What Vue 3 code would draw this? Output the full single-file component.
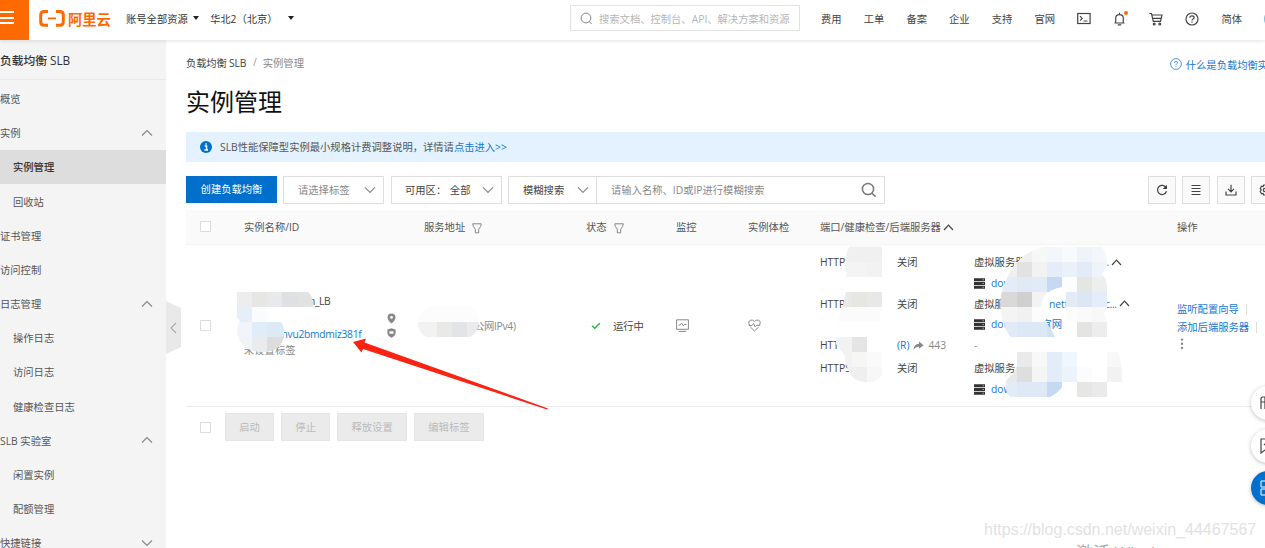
<script setup>
import { ref } from "vue";

const navLinks = ["费用", "工单", "备案", "企业", "支持", "官网"];

const menu = ref([
  { label: "概览" },
  { label: "实例", arrow: "up" },
  { label: "实例管理", child: true, active: true },
  { label: "回收站", child: true },
  { label: "证书管理" },
  { label: "访问控制" },
  { label: "日志管理", arrow: "up" },
  { label: "操作日志", child: true },
  { label: "访问日志", child: true },
  { label: "健康检查日志", child: true },
  { label: "SLB 实验室", arrow: "up" },
  { label: "闲置实例", child: true },
  { label: "配额管理", child: true },
  { label: "快捷链接", arrow: "down" },
]);

const listeners = [
  { id: 1, port: "HTTPS", check: "关闭", group: "虚拟服务器", tail: ".", tailClass: "tail-a", arrow: true, server: "dow" },
  { id: 2, port: "HTTPS", check: "关闭", group: "虚拟服", mid: "nett", tail: "c...", tailClass: "tail-b", arrow: true, server: "dow", serverTail: "官网" },
  { id: 3, port: "HTTP", redirect: "443" },
  { id: 4, port: "HTTPS", check: "关闭", group: "虚拟服务", server: "dow" },
];

const batchActions = ["启动", "停止", "释放设置", "编辑标签"];

// redaction blocks: x, y, width, height, fill
const nameBlocks = [
  [237, 292, 15, 15, "#ededed"], [252, 292, 15, 15, "#e6e6e4"], [267, 292, 15, 15, "#e8e9eb"],
  [282, 292, 15, 15, "#dfe0e3"], [297, 292, 17, 15, "#e2e2e2"],
  [237, 307, 15, 15, "#e6eff9"], [252, 307, 15, 15, "#f9fbff"],
  [237, 322, 15, 15, "#f1f5fb"], [252, 322, 15, 15, "#e0ecf8"], [267, 322, 18, 15, "#dceaf5"],
  [237, 337, 15, 15, "#f2f3f7"], [252, 337, 15, 15, "#eaebed"], [267, 337, 17, 15, "#dddddd"],
];
const addressBlocks = [
  [417, 307, 62, 15, "#fcfcfc"], [417, 322, 20, 15, "#f2f2f2"], [437, 322, 15, 15, "#e9e9e7"],
  [452, 322, 15, 15, "#e2e4e6"], [467, 322, 12, 15, "#ebebeb"],
];
const portBlocks = [
  [846, 243, 36, 4, "#fafafa"], [846, 247, 36, 15, "#f0f0f0"], [846, 262, 21, 15, "#f4f4f4"], [867, 262, 15, 15, "#f2f2f2"],
  [842, 292, 10, 15, "#e8eaea"], [852, 292, 15, 15, "#e6e6e3"], [867, 292, 15, 15, "#e8e8e8"], [838, 307, 44, 15, "#fbfbfb"],
  [836, 337, 16, 15, "#f0f2f3"], [852, 337, 15, 15, "#e5e5e5"],
  [836, 352, 16, 15, "#f0f2f4"], [852, 352, 15, 15, "#f6f6f4"], [867, 352, 15, 15, "#fafafa"],
  [846, 367, 21, 15, "#efefef"], [867, 367, 15, 15, "#f7f7f7"],
];
const cellWidth = 15;
const groupRows = [
  [247, ["#f8f8f8", "#f0f0f0", "#f6f7f7", "#f3f7fb", "#f8fafd", "#eff4fa", "#f3f7fb"]],
  [262, ["#f0f0f0", "#e2e2e2", "#f2f2f2", "#e5eef8", "#eaf1f9", "#e2ebf7", "#eef4fa"]],
  [277, ["#e4edf7", "#dfeaf5", "#dfebf6", "#c5daf0", "#fcfdfe", "#e5e5e2", "#edefef"]],
  [292, ["#d9d9d9", "#d0d0d1", "#f3f3f3", "#ffffff", "#e2ebf6", "#dbe7f5", "#e4edf9"]],
  [307, ["#f4f4f4", "#f1f1f1", "#fcfcfc", "#ffffff", "#fcfcfc", "#fafafa", "#f8f8f8"]],
  [322, ["#e1ebf7", "#dce8f6", "#dce8f5", "#d2e2f3", "#ffffff", "#e4e4e2", "#ecedec"]],
  [352, ["#f3f3f3", "#eaeaea", "#f8f8f8", "#e2edf9", "#f0f6fd", "#ffffff", "#ffffff", "#f8f8f8"]],
  [367, ["#e8e8e8", "#dedede", "#f5f5f5", "#e3edf8", "#edf3fa", "#fcfcfc", "#ffffff", "#f2f2f2"]],
  [382, ["#e2ecf6", "#dfe9f6", "#dfe9f5", "#c5daf0", "#ffffff", "#e6e7e5", "#e9eae9"]],
];
const groupBlocks = groupRows.flatMap(([y, fills]) =>
  fills.map((fill, i) => [
    i === 0 ? 1000 : 1002 + i * cellWidth,
    y,
    i === 0 ? 17 : cellWidth,
    15,
    fill,
  ]),
);
const masks = [
  { id: "name", blocks: nameBlocks },
  { id: "address", blocks: addressBlocks },
  { id: "port", blocks: portBlocks },
  { id: "group", blocks: groupBlocks },
];
</script>

<template>
  <div class="console">
    <header class="topbar">
      <div class="menu-button"><i></i><i></i><i></i></div>
      <div class="brand">
        <svg width="26" height="17" viewBox="0 0 26 17">
          <path d="M9 1.6H5.2Q1.7 1.6 1.7 5V12Q1.7 15.2 5.2 15.2H9M17 1.6H20.8Q24.3 1.6 24.3 5V12Q24.3 15.2 20.8 15.2H17" fill="none" stroke="#ff6a00" stroke-width="3" />
          <path d="M9 8.4H17" stroke="#ff6a00" stroke-width="1.8" />
        </svg>
        <span>阿里云</span>
      </div>
      <div class="scope">账号全部资源<i class="caret"></i></div>
      <div class="scope region">华北2（北京）<i class="caret"></i></div>
      <div class="global-search">
        <svg width="13" height="13" viewBox="0 0 13 13"><circle cx="6" cy="6" r="4.9" /><path d="M9.3 9.5L11.5 12" /></svg>
        <span>搜索文档、控制台、API、解决方案和资源</span>
      </div>
      <nav class="top-links">
        <span v-for="link in navLinks" :key="link">{{ link }}</span>
        <svg width="14" height="14" viewBox="0 0 14 14"><rect x=".7" y="1.5" width="12.4" height="10" /><path d="M3 4.2L5.2 6.4L3 8.6M6.5 9H10.5" /></svg>
        <span class="bell">
          <svg width="13" height="14" viewBox="0 0 13 14"><path d="M1.5 11H11.5M2.7 11V6.4Q2.7 2.7 6.5 2.7T10.3 6.4V11M6.5 .8V2.7M4.8 12.9H8.2" /></svg>
          <i></i>
        </span>
        <svg width="14" height="14" viewBox="0 0 14 14"><path d="M.4 1.5H2.5L4.3 9.4H11.5L13 3H3M4 6.3H12" /><circle cx="5.2" cy="12" r=".9" /><circle cx="10.8" cy="12" r=".9" /></svg>
        <svg width="14" height="14" viewBox="0 0 14 14"><circle cx="7" cy="7" r="6" /><path d="M4.9 5.7Q4.9 3.8 7 3.8T9.1 5.6Q9.1 6.6 7.8 7.2Q7 7.6 7 8.5M7 9.4V10.7" /></svg>
        <span>简体</span>
        <i class="avatar"></i>
      </nav>
    </header>

    <div class="body">
      <aside class="sidebar">
        <h2>负载均衡 SLB</h2>
        <ul>
          <li v-for="item in menu" :key="item.label" :class="{ child: item.child, active: item.active }">
            <span>{{ item.label }}</span>
            <svg v-if="item.arrow" class="arrow" :class="item.arrow" width="12" height="8" viewBox="0 0 12 8"><path d="M1 6.5L6 1.5L11 6.5" /></svg>
          </li>
        </ul>
        <div class="collapse">
          <svg width="15" height="53" viewBox="0 0 15 53"><path d="M0 0L15 7V46L0 53Z" fill="#e9e9e9" /><path d="M10 22L5 27L10 32" fill="none" stroke="#aaa" stroke-width="1.2" /></svg>
        </div>
      </aside>

      <main class="main">
        <div class="crumbs">
          <span class="root">负载均衡 SLB</span><em>/</em><span class="current">实例管理</span>
          <a class="help">
            <svg width="12" height="12" viewBox="0 0 14 14"><circle cx="7" cy="7" r="6.3" /><path d="M5.2 5.7Q5.2 4 7 4T8.8 5.6Q8.8 6.4 7.7 7Q7 7.4 7 8.4M7 9.4V10.4" /></svg>
            什么是负载均衡实例
          </a>
        </div>
        <h1>实例管理</h1>

        <div class="notice">
          <svg width="12" height="12" viewBox="0 0 12 12"><circle cx="6" cy="6" r="6" fill="#0070cc" /><path d="M4.7 5H6.6V8.8M4.4 9H8M6 2.3V3.8" fill="none" stroke="#fff" stroke-width="1.4" /></svg>
          <span>SLB性能保障型实例最小规格计费调整说明，详情请<a>点击进入&gt;&gt;</a></span>
        </div>

        <div class="toolbar">
          <button class="primary">创建负载均衡</button>
          <div class="select tag"><span>请选择标签</span><svg class="arrow" width="12" height="8" viewBox="0 0 12 8"><path d="M1 1.3L6 6.5L11 1.3" /></svg></div>
          <div class="select zone"><span>可用区：&nbsp;全部</span><svg class="arrow" width="12" height="8" viewBox="0 0 12 8"><path d="M1 1.3L6 6.5L11 1.3" /></svg></div>
          <div class="select fuzzy"><span>模糊搜索</span><svg class="arrow" width="12" height="8" viewBox="0 0 12 8"><path d="M1 1.3L6 6.5L11 1.3" /></svg></div>
          <div class="query">
            <span>请输入名称、ID或IP进行模糊搜索</span>
            <svg width="16" height="16" viewBox="0 0 16 16"><circle cx="7" cy="7" r="5.6" /><path d="M11 11.2L14.6 14.6" /></svg>
          </div>
          <div class="tools">
            <button><svg width="12" height="12" viewBox="0 0 12 12"><path d="M10.2 3.8A4.6 4.6 0 1 0 10.5 7.3" /><path class="solid" d="M10.9 .8V4.9H6.8Z" /></svg></button>
            <button><svg width="12" height="12" viewBox="0 0 12 12"><path d="M1.5 1.5H10.5M1.5 4.5H10.5M1.5 7.5H10.5M1.5 10.5H10.5" /></svg></button>
            <button><svg width="12" height="12" viewBox="0 0 12 12"><path d="M1 7.5V11H11V7.5M6 .8V7.5M3 4.8L6 7.8L9 4.8" /></svg></button>
            <button><svg width="12" height="12" viewBox="0 0 12 12"><path d="M4.7 1H7.3L7.8 2.5L9.4 2.1L10.8 4.4L9.8 6L10.8 7.6L9.4 9.9L7.8 9.5L7.3 11H4.7L4.2 9.5L2.6 9.9L1.2 7.6L2.2 6L1.2 4.4L2.6 2.1L4.2 2.5Z" /><circle cx="6" cy="6" r="1.7" /></svg></button>
          </div>
        </div>

        <div class="table">
          <div class="row head">
            <div><i class="checkbox"></i></div>
            <div>实例名称/ID</div>
            <div>服务地址<svg class="filter" width="10" height="11" viewBox="0 0 10 11"><path d="M.7 .8H9.3Q9.2 3.8 6.7 6V9.8H3.3V6Q.8 3.8 .7 .8Z" /></svg></div>
            <div>状态<svg class="filter" width="10" height="11" viewBox="0 0 10 11"><path d="M.7 .8H9.3Q9.2 3.8 6.7 6V9.8H3.3V6Q.8 3.8 .7 .8Z" /></svg></div>
            <div>监控</div>
            <div>实例体检</div>
            <div>端口/健康检查/后端服务器<svg class="expand" width="11" height="7" viewBox="0 0 11 7"><path d="M1 6L5.5 1.2L10 6" /></svg></div>
            <div>操作</div>
          </div>
          <div class="row record">
            <div><i class="checkbox"></i></div>
            <div class="name-cell">
              <div class="names">
                <span class="name">n_LB</span>
                <a class="instance-id">hvu2bmdmiz381f</a>
                <span class="no-tag">未设置标签</span>
              </div>
              <div class="marks">
                <svg width="9" height="11" viewBox="0 0 9 11"><path fill-rule="evenodd" d="M4.5 .4A4 4 0 0 1 8.5 4.4Q8.5 7 4.5 10.5Q.5 7 .5 4.4A4 4 0 0 1 4.5 .4ZM4.5 3A1.4 1.4 0 1 0 4.5 5.8A1.4 1.4 0 0 0 4.5 3Z" /></svg>
                <svg width="9" height="10" viewBox="0 0 9 10"><path fill-rule="evenodd" d="M.4 1.4L4.5 .3L8.6 1.4V5Q8.4 8.2 4.5 9.7Q.6 8.2 .4 5ZM2.5 3.2V5.8H6.5V3.2Z" /></svg>
              </div>
            </div>
            <div><span class="address">公网IPv4)</span></div>
            <div class="status"><svg width="10" height="8" viewBox="0 0 10 8"><path d="M1 3.8L3.7 6.3L8.8 1.2" /></svg>运行中</div>
            <div><svg class="metric" width="13" height="13" viewBox="0 0 13 13"><path d="M.6 .8H12.4V10.3H.6ZM2.7 12.4H10.3M2.7 6H4.2L5.6 4.2L7.3 6.7L8.3 5.5H10.3" /></svg></div>
            <div><svg class="metric" width="13" height="13" viewBox="0 0 13 13"><path d="M1.4 6Q-.3 2 2.7 1.2Q5 .5 6.5 2.6Q8 .5 10.3 1.2Q13.3 2 11.6 6M2.4 8L6.5 12L10.6 8M.8 6.5H4L5.5 4.4L7.2 8L8.7 6.3H12.2" /></svg></div>
            <div class="listeners">
              <div v-for="item in listeners" :key="item.id" class="listener" :class="{ redirect: item.redirect }">
                <span class="port">{{ item.port }}</span>
                <span v-if="item.redirect" class="check muted"><a>(R)</a><svg width="11" height="9" viewBox="0 0 11 9"><path d="M6 .5L10.6 4.2L6 7.8V5.7Q2.4 5.5 .5 8.5Q1.1 3.1 6 2.8Z" /></svg>{{ item.redirect }}</span>
                <span v-else class="check">{{ item.check }}</span>
                <div class="backend">
                  <div v-if="item.redirect" class="muted">-</div>
                  <div v-else class="group">
                    {{ item.group }}
                    <a v-if="item.mid" class="mid">{{ item.mid }}</a>
                    <a v-if="item.tail" :class="item.tailClass">{{ item.tail }}</a>
                    <svg v-if="item.arrow" class="expand" width="11" height="7" viewBox="0 0 11 7"><path d="M1 6L5.5 1.2L10 6" /></svg>
                  </div>
                  <div v-if="item.server" class="server">
                    <svg width="11" height="11" viewBox="0 0 11 11"><path d="M0 .3H11V3.3H0ZM0 4H11V7H0ZM0 7.7H11V10.7H0Z" /><path class="led" d="M8.5 1.8H10M8.5 5.5H10M8.5 9.2H10" /></svg>
                    <a>{{ item.server }}</a>
                    <a v-if="item.serverTail" class="server-tail">{{ item.serverTail }}</a>
                  </div>
                </div>
              </div>
            </div>
            <div class="ops">
              <p><a>监听配置向导</a><i></i></p>
              <p><a>添加后端服务器</a><i></i></p>
              <svg width="10" height="12" viewBox="0 0 10 12"><circle cx="5" cy="1.6" r="1.2" /><circle cx="5" cy="5.8" r="1.2" /><circle cx="5" cy="10" r="1.2" /></svg>
            </div>
          </div>
        </div>

        <div class="batch">
          <i class="checkbox"></i>
          <button v-for="action in batchActions" :key="action">{{ action }}</button>
        </div>
      </main>
    </div>

    <!-- redactions and pointer drawn over the table -->
    <svg class="overlay" width="1265" height="548" viewBox="0 0 1265 548">
      <defs>
        <clipPath id="clip-name"><path d="M237 292H308Q314 297 313 307H267V322H281Q286 329 283 340Q279 352 263 352Q243 352 238 337Q235 328 240 321L237 318Z" /></clipPath>
        <clipPath id="clip-address"><path d="M428 307H470Q479 312 479 322Q478 333 470 337H426Q418 332 418 322Q420 311 428 307Z" /></clipPath>
        <clipPath id="clip-port"><path d="M853 243H878Q882 245 882 250V277H846V257Q847 247 853 243ZM846 292H882V307L879 322H838L843 305ZM836 337H867V352H882V375Q878 382 870 382H864Q852 381 848 370Q845 361 845 356L836 344Z" /></clipPath>
        <clipPath id="clip-group"><path d="M1043 247H1102Q1107 253 1107 262Q1106 271 1101 274Q1107 278 1107 286V308L1104 314L1107 322V337H1077L1066 322V292H1062V287Q1049 289 1043 298Q1038 309 1046 321Q1051 329 1055 337H1010Q1000 321 1000 302Q1002 283 1014 266Q1024 252 1043 247ZM1017 352H1118Q1122 358 1122 382H1107V397H1077V382H1062V387Q1058 393 1050 397H1010Q1005 393 1006 382Q1008 377 1014 373L1017 365Z" /></clipPath>
      </defs>
      <g v-for="mask in masks" :key="mask.id" :clip-path="`url(#clip-${mask.id})`">
        <rect v-for="(block, i) in mask.blocks" :key="i" :x="block[0]" :y="block[1]" :width="block[2]" :height="block[3]" :fill="block[4]" />
      </g>
      <path class="pointer" d="M353 342L366 338.5L364.5 342.5L548 408.5L547 409.5L363 349L361.5 352.5Z" />
    </svg>

    <div class="floating">
      <span><svg width="16" height="16" viewBox="0 0 16 16"><path d="M1 14V4Q1 2 3 2H8M1 7H8M5 2V14" /></svg></span>
      <span><svg width="16" height="16" viewBox="0 0 16 16"><path d="M1 1H15V12H5L1 15ZM4 7L6 5" /></svg></span>
      <span class="blue"><svg width="16" height="16" viewBox="0 0 16 16"><path d="M1 1H7V7H1ZM9 1H15V7H9ZM1 9H7V15H1ZM9 9H15V15H9Z" /></svg></span>
    </div>
    <div class="watermark">https://blog.csdn.net/weixin_44467567</div>
    <div class="activate">激活 Windows</div>
  </div>
</template>

<style>
body {
  overflow: hidden;
}
</style>

<style scoped>
.console {
  position: relative;
  width: 1265px;
  height: 548px;
  overflow: hidden;
  background: #fff;
  color: #444;
  font-family: "Open Sans", "Noto Sans CJK SC", sans-serif;
  font-size: 10.3px;
  white-space: nowrap;
}

svg {
  flex: none;
  fill: none;
  stroke: #444;
  stroke-width: 1.2;
}

i,
em {
  font-style: normal;
}

a {
  color: #1677d2;
}

button {
  padding: 0;
  font: inherit;
}

.topbar {
  position: relative;
  z-index: 1;
  display: flex;
  align-items: center;
  height: 40px;
  background: #fff;
  box-shadow: 0 1px 4px rgba(0, 0, 0, 0.12);
}

.topbar > *,
.toolbar > * {
  flex: none;
}

.menu-button {
  display: flex;
  flex-direction: column;
  justify-content: center;
  gap: 3.5px;
  width: 29px;
  height: 40px;
  padding-bottom: 5px;
  box-sizing: border-box;
  background: #ff6a00;
}

.menu-button i {
  width: 14px;
  height: 2px;
  background: #fff;
}

.brand {
  display: flex;
  align-items: center;
  gap: 3px;
  width: 87px;
  margin-left: 10px;
  margin-top: -3px;
  color: #ff6a00;
  font-size: 14.3px;
  font-weight: 700;
}

.scope {
  display: flex;
  align-items: center;
  gap: 5px;
  width: 84px;
  margin-top: -4px;
  color: #333;
}

.region {
  gap: 10px;
}

.caret {
  border: 3px solid transparent;
  border-top: 4px solid #222;
  border-bottom: 0;
}

.global-search {
  display: flex;
  align-items: center;
  gap: 6px;
  width: 230px;
  height: 26px;
  margin-left: 276px;
  margin-top: -4px;
  padding-left: 9px;
  box-sizing: border-box;
  border: 1px solid #e2e2e2;
  color: #b5b5b5;
}

.global-search svg {
  stroke: #888;
  stroke-width: 1;
}

.top-links {
  display: flex;
  align-items: center;
  gap: 22.1px;
  margin-left: 21px;
  margin-top: -3px;
}

.bell {
  position: relative;
  display: flex;
  width: 14px;
}

.bell i {
  position: absolute;
  top: -1px;
  right: -1px;
  width: 4px;
  height: 4px;
  border-radius: 50%;
  background: #ff6a00;
}

.avatar {
  flex: none;
  width: 20px;
  height: 20px;
  border-radius: 50%;
  background: #7fc1dc;
}

.body {
  display: flex;
  height: 508px;
}

.sidebar {
  position: relative;
  width: 166px;
  flex: none;
  background: #f4f4f4;
}

.sidebar h2 {
  height: 39px;
  margin: 0 0 1.4px;
  border-bottom: 1px solid #ebebeb;
  font-size: 11.8px;
  font-weight: 500;
  line-height: 40px;
  letter-spacing: -0.05px;
  color: #333;
}

.sidebar ul {
  margin: 0;
  padding: 0;
  list-style: none;
}

.sidebar li {
  display: flex;
  align-items: center;
  justify-content: space-between;
  height: 34.2px;
  padding-right: 13px;
  color: #555;
}

.sidebar li.child {
  padding-left: 13px;
}

.sidebar li.active {
  background: #ddd;
  color: #333;
  font-weight: 500;
}

.arrow {
  stroke: #888;
}

.arrow.down {
  transform: rotate(180deg);
}

.collapse {
  position: absolute;
  top: 261px;
  left: 166px;
}

.collapse svg {
  stroke: none;
}

.main {
  display: flex;
  flex-direction: column;
  width: 1079px;
  padding-left: 20px;
  flex: none;
}

.crumbs {
  display: flex;
  align-items: center;
  height: 44px;
  color: #444;
}

.crumbs .root {
  width: 60px;
  letter-spacing: -0.15px;
}

.crumbs em {
  width: 4px;
  margin: 0 6px 0 7px;
  color: #999;
}

.crumbs .current {
  width: 41px;
  color: #888;
}

.help {
  display: flex;
  align-items: center;
  gap: 4px;
  margin-left: 866px;
  padding-top: 4px;
}

.help svg {
  stroke: #1677d2;
  stroke-width: 0.9;
}

h1 {
  height: 36px;
  margin: 0 0 12px;
  font-size: 24px;
  font-weight: 400;
  line-height: 35px;
  color: #111;
}

.notice {
  display: flex;
  align-items: center;
  gap: 8px;
  height: 30px;
  padding-left: 14px;
  background: #e3f2fe;
  color: #555;
}

.notice svg {
  stroke: none;
}

.notice span {
  margin-top: -1px;
}

.toolbar {
  display: flex;
  height: 28px;
  margin: 14px 0 6px;
}

.primary {
  width: 91px;
  height: 27px;
  padding-bottom: 2px;
  border: 0;
  background: #0070cc;
  color: #fff;
}

.select,
.query {
  display: flex;
  align-items: center;
  justify-content: space-between;
  height: 28px;
  padding: 0 7px 1px 14px;
  box-sizing: border-box;
  border: 1px solid #dedede;
}

.tag {
  width: 101px;
  margin-left: 6px;
  color: #888;
}

.zone {
  width: 111px;
  margin-left: 7px;
  padding-left: 13px;
}

.zone span {
  word-spacing: 1px;
}

.fuzzy {
  width: 89px;
  margin-left: 6px;
}

.query {
  width: 289px;
  margin-left: -1px;
  color: #888;
}

.query svg {
  stroke: #777;
  stroke-width: 1.5;
}

.tools {
  display: flex;
  gap: 6.3px;
  margin-left: 263px;
}

.tools button {
  display: flex;
  align-items: center;
  justify-content: center;
  flex: none;
  width: 28px;
  height: 28px;
  box-sizing: border-box;
  border: 1px solid #dedede;
  background: #fafafa;
}

.tools .solid {
  fill: #333;
  stroke: none;
}

.row {
  display: grid;
  grid-template-columns: 58px 180px 162px 90px 72px 72px 357px 88px;
  align-items: center;
}

.head {
  height: 34px;
  padding-bottom: 1px;
  box-sizing: border-box;
  background: #fafafa;
  color: #555;
}

.checkbox {
  display: block;
  width: 9px;
  height: 9px;
  margin-left: 14px;
  border: 1px solid #ddd;
  background: #fff;
}

.filter {
  margin-left: 7px;
  vertical-align: -3px;
  stroke: #888;
  stroke-width: 1;
}

.expand {
  margin-left: 2px;
  stroke: #444;
}

.record {
  height: 163px;
  border-top: 1px solid #f3f3f3;
  border-bottom: 1px solid #ebebeb;
  box-sizing: border-box;
}

.name-cell {
  display: flex;
  align-items: center;
}

.names {
  display: flex;
  flex-direction: column;
  width: 143px;
  line-height: 16.5px;
}

.name {
  margin: 0 0 16.5px 65px;
  letter-spacing: -0.4px;
}

.instance-id {
  margin-left: 37.5px;
  letter-spacing: -0.28px;
}

.no-tag {
  color: #888;
}

.marks {
  display: flex;
  flex-direction: column;
  gap: 4px;
}

.marks svg {
  fill: #888;
  stroke: none;
}

.address {
  margin-left: 50px;
  letter-spacing: -0.3px;
  color: #888;
}

.status {
  display: flex;
  align-items: center;
  gap: 12px;
  padding-left: 5px;
}

.status svg {
  stroke: #35b34a;
  stroke-width: 1.5;
}

.metric {
  display: block;
  stroke: #888;
  stroke-width: 1;
}

.listeners {
  padding-top: 1px;
  line-height: 20.6px;
}

.listener {
  display: grid;
  grid-template-columns: 77px 77px 1fr;
  align-items: start;
}

.listener.redirect {
  height: 23.5px;
}

.muted {
  color: #888;
}

.check.muted svg {
  margin: 0 4px;
  vertical-align: -1px;
  fill: #888;
  stroke: none;
}

.group,
.server {
  display: flex;
  align-items: center;
}

.group .mid {
  width: 20px;
  margin-left: 44px;
}

.tail-a {
  margin-left: 81px;
}

.tail-b {
  margin-left: 36px;
  letter-spacing: -0.3px;
}

.server {
  gap: 6px;
}

.server svg {
  fill: #333;
  stroke: none;
}

.server .led {
  stroke: #bbb;
  stroke-width: 0.8;
}

.server-tail {
  margin-left: 24px;
}

.ops {
  line-height: 17.5px;
}

.ops p {
  display: flex;
  align-items: center;
  margin: 0;
}

.ops p i {
  width: 1px;
  height: 11px;
  margin-left: 7px;
  background: #ddd;
}

.ops svg {
  display: block;
  margin-top: 2px;
  fill: #888;
  stroke: none;
}

.batch {
  display: flex;
  align-items: center;
  gap: 6.8px;
  height: 40px;
}

.batch .checkbox {
  margin-right: 7px;
}

.batch button {
  height: 28px;
  padding: 0 13.4px 1px;
  border: 1px solid #e6e6e6;
  background: #ebebeb;
  color: #bbb;
}

.overlay {
  position: absolute;
  inset: 0;
  z-index: 2;
  stroke: none;
}

.pointer {
  fill: #fb2314;
}

.floating {
  position: absolute;
  z-index: 3;
  top: 386px;
  left: 1251px;
  display: flex;
  flex-direction: column;
  gap: 8.5px;
}

.floating span {
  display: flex;
  align-items: center;
  justify-content: center;
  width: 34px;
  height: 34px;
  border-radius: 50%;
  background: #fff;
  box-shadow: 0 1px 4px rgba(0, 0, 0, 0.25);
}

.floating .blue {
  background: #0070cc;
}

.floating .blue svg {
  stroke: #fff;
  stroke-width: 1;
}

.watermark {
  position: absolute;
  top: 520px;
  left: 984px;
  font-family: "Liberation Sans", sans-serif;
  font-size: 16px;
  line-height: 20px;
  color: #e2e2e2;
}

.activate {
  position: absolute;
  top: 541px;
  left: 1076px;
  font-size: 17px;
  line-height: 24px;
  color: #aaa;
}
</style>
